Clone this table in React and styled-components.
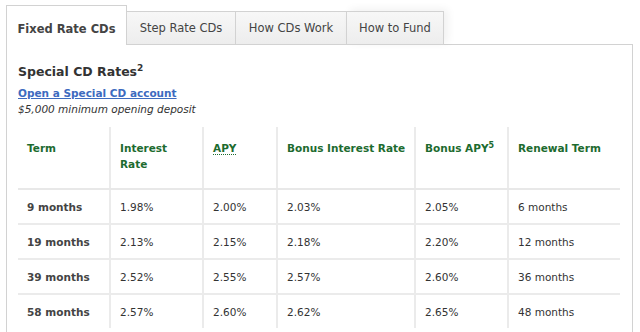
import styled, { createGlobalStyle } from 'styled-components';

const GlobalStyle = createGlobalStyle`
  body {
    margin: 0;
    background: #fff;
    font-family: "DejaVu Sans", Verdana, sans-serif;
    color: #333;
  }
`;

const Page = styled.div`
  width: 627px;
  padding: 5px 0 0 6px;
`;

const TabBar = styled.div`
  display: flex;
  align-items: flex-end;
  margin-bottom: -1px;
  position: relative;
  z-index: 1;
`;

const Tab = styled.div`
  box-sizing: border-box;
  width: ${(p) => p.$w}px;
  height: ${(p) => (p.$active ? 40 : 34)}px;
  margin-left: ${(p) => (p.$first ? 0 : -1)}px;
  border: 1px solid #d2d2d2;
  border-bottom: ${(p) => (p.$active ? 'none' : '1px solid #d2d2d2')};
  background: ${(p) => (p.$active ? '#fff' : 'linear-gradient(#f7f7f7, #ededed)')};
  display: flex;
  align-items: center;
  justify-content: center;
  padding-top: ${(p) => (p.$active ? 7 : 0)}px;
  font-size: 11.5px;
  font-weight: ${(p) => (p.$active ? 700 : 400)};
  color: #444;
  box-shadow: ${(p) => (p.$last ? '4px -2px 8px rgba(0,0,0,0.06)' : 'none')};
`;

const Panel = styled.div`
  border: 1px solid #d2d2d2;
  background: #fff;
  padding: 17px 11px 0;
  height: 300px;
`;

const Title = styled.h2`
  margin: 0 0 3px;
  font-size: 12.5px;
  line-height: 20px;
  font-weight: 700;
  color: #333;

  sup {
    font-size: 9px;
    vertical-align: 5px;
    line-height: 0;
  }
`;

const Link = styled.a`
  display: block;
  font-size: 10.5px;
  line-height: 16px;
  font-weight: 700;
  color: #3d6bbf;
  text-decoration: underline;
`;

const Note = styled.div`
  font-size: 10.5px;
  line-height: 16px;
  font-style: italic;
  color: #333;
  margin-bottom: 10px;
`;

const Table = styled.table`
  width: 602px;
  table-layout: fixed;
  border-collapse: collapse;
  font-size: 10.5px;
  line-height: 16px;
`;

const Th = styled.th`
  text-align: left;
  vertical-align: top;
  padding: 13px 8px 16px 9px;
  color: #1d6b2f;
  font-weight: 700;
  border-left: ${(p) => (p.$first ? 'none' : '2px solid #ebebeb')};
  border-bottom: 2px solid #e8e8e8;

  abbr {
    text-decoration: none;
    border-bottom: 1px dotted #1d6b2f;
  }

  sup {
    font-size: 8px;
    vertical-align: 4px;
    line-height: 0;
  }
`;

const Td = styled.td`
  padding: 9px 8px 8px 9px;
  color: ${(p) => (p.$head ? '#444' : '#333')};
  font-weight: ${(p) => (p.$head ? 700 : 400)};
  border-left: ${(p) => (p.$first ? 'none' : '2px solid #ebebeb')};
  border-top: 2px solid #ebebeb;
`;

const tabs = [
  { label: 'Fixed Rate CDs', w: 121 },
  { label: 'Step Rate CDs', w: 110 },
  { label: 'How CDs Work', w: 112 },
  { label: 'How to Fund', w: 98 },
];

const widths = [92, 93, 74, 138, 93, 112];

const rows = [
  ['9 months', '1.98%', '2.00%', '2.03%', '2.05%', '6 months'],
  ['19 months', '2.13%', '2.15%', '2.18%', '2.20%', '12 months'],
  ['39 months', '2.52%', '2.55%', '2.57%', '2.60%', '36 months'],
  ['58 months', '2.57%', '2.60%', '2.62%', '2.65%', '48 months'],
];

export default function App() {
  return (
    <Page>
      <GlobalStyle />
      <TabBar>
        {tabs.map((t, i) => (
          <Tab key={t.label} $w={t.w} $active={i === 0} $first={i === 0} $last={i === tabs.length - 1}>
            {t.label}
          </Tab>
        ))}
      </TabBar>
      <Panel>
        <Title>
          Special CD Rates<sup>2</sup>
        </Title>
        <Link href="#">Open a Special CD account</Link>
        <Note>$5,000 minimum opening deposit</Note>
        <Table>
          <colgroup>
            {widths.map((w, i) => (
              <col key={i} style={{ width: w }} />
            ))}
          </colgroup>
          <thead>
            <tr>
              <Th $first>Term</Th>
              <Th>Interest Rate</Th>
              <Th>
                <abbr title="Annual Percentage Yield">APY</abbr>
              </Th>
              <Th>Bonus Interest Rate</Th>
              <Th>
                Bonus APY<sup>5</sup>
              </Th>
              <Th>Renewal Term</Th>
            </tr>
          </thead>
          <tbody>
            {rows.map((r) => (
              <tr key={r[0]}>
                {r.map((c, i) => (
                  <Td key={i} $first={i === 0} $head={i === 0}>
                    {c}
                  </Td>
                ))}
              </tr>
            ))}
          </tbody>
        </Table>
      </Panel>
    </Page>
  );
}
